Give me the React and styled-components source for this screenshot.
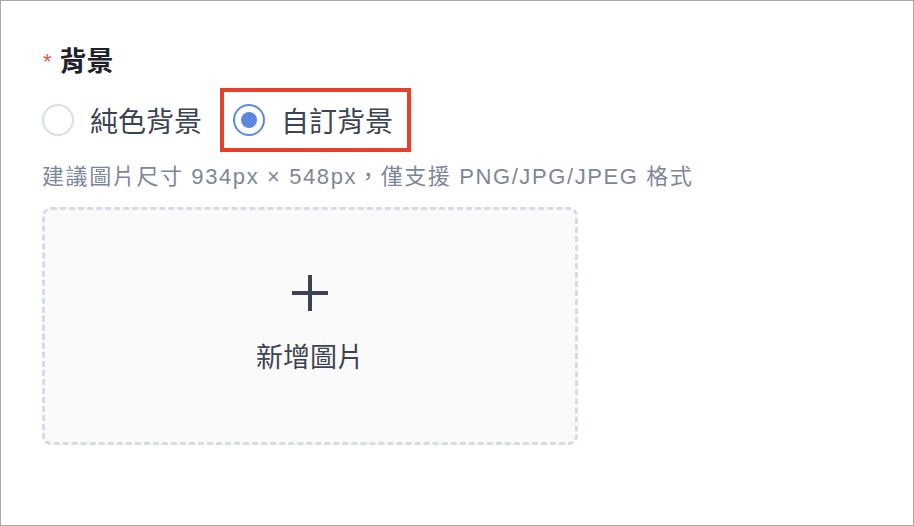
import React, { useState } from 'react'
import styled, { createGlobalStyle } from 'styled-components'

const GlobalStyle = createGlobalStyle`
  html, body {
    margin: 0;
    padding: 0;
    background: #ffffff;
  }
  body {
    font-family: "Liberation Sans", "Noto Sans CJK TC", sans-serif;
  }
`

const Frame = styled.div`
  box-sizing: border-box;
  width: 914px;
  height: 526px;
  border: 1px solid #a9a9a9;
  background: #ffffff;
  padding: 43px 41px 0;
`

const FormItem = styled.div`
  display: flex;
  flex-direction: column;
`

const Label = styled.div`
  display: flex;
  align-items: flex-start;
  height: 32px;
  font-family: "Noto Sans CJK TC", sans-serif;
  font-size: 27px;
  line-height: 32px;
  font-weight: 700;
  color: #1f2329;
  .required {
    font-family: "Liberation Sans", sans-serif;
    color: #ef5350;
    font-size: 22px;
    line-height: 22px;
    font-weight: 400;
    margin: 7px 8px 0 1px;
  }
`

const RadioGroup = styled.div`
  display: flex;
  align-items: center;
  gap: 31px;
  margin-top: 28px;
`

const Option = styled.label`
  position: relative;
  display: flex;
  align-items: center;
  gap: 16px;
  cursor: pointer;
  font-family: "Noto Sans CJK TC", sans-serif;
  font-size: 28px;
  line-height: 32px;
  color: #3d4451;
  ${(p) =>
    p.$highlight &&
    `
    &::after {
      content: '';
      position: absolute;
      top: -16px;
      bottom: -16px;
      left: -13px;
      right: -18px;
      border: 4px solid #e8402a;
      pointer-events: none;
    }
  `}
`

const Circle = styled.span`
  box-sizing: border-box;
  width: 32px;
  height: 32px;
  border-radius: 50%;
  border: 2px solid ${(p) => (p.$checked ? '#5a8ae6' : '#d6dee7')};
  display: flex;
  align-items: center;
  justify-content: center;
  background: #ffffff;
  &::before {
    content: '';
    width: 16px;
    height: 16px;
    border-radius: 50%;
    background: ${(p) => (p.$checked ? '#5a87e0' : 'transparent')};
  }
`

const Hint = styled.div`
  margin-top: 26px;
  font-size: 22px;
  line-height: 30px;
  letter-spacing: 1.6px;
  color: #7d8799;
`

const Upload = styled.button`
  box-sizing: border-box;
  margin-top: 15px;
  width: 536px;
  height: 238px;
  border: 3px dashed #d5dce4;
  border-radius: 9px;
  background: #fafafa;
  display: flex;
  flex-direction: column;
  align-items: center;
  justify-content: center;
  gap: 28px;
  padding: 0 0 6px;
  cursor: pointer;
  font-family: "Noto Sans CJK TC", sans-serif;
  font-size: 27px;
  line-height: 32px;
  color: #3d4451;
  svg {
    display: block;
  }
`

const options = [
  { value: 'solid', label: '純色背景' },
  { value: 'custom', label: '自訂背景' },
]

export default function App() {
  const [bg, setBg] = useState('custom')

  return (
    <>
      <GlobalStyle />
      <Frame>
        <FormItem>
          <Label>
            <span className="required">*</span>
            背景
          </Label>
          <RadioGroup>
            {options.map((o) => (
              <Option
                key={o.value}
                $highlight={o.value === 'custom'}
                onClick={() => setBg(o.value)}
              >
                <Circle $checked={bg === o.value} />
                {o.label}
              </Option>
            ))}
          </RadioGroup>
          <Hint>建議圖片尺寸 934px × 548px，僅支援 PNG/JPG/JPEG 格式</Hint>
          <Upload type="button">
            <svg width="38" height="38" viewBox="0 0 38 38" fill="none">
              <path d="M19 1v36M1 19h36" stroke="#3d4451" strokeWidth="4" />
            </svg>
            新增圖片
          </Upload>
        </FormItem>
      </Frame>
    </>
  )
}
